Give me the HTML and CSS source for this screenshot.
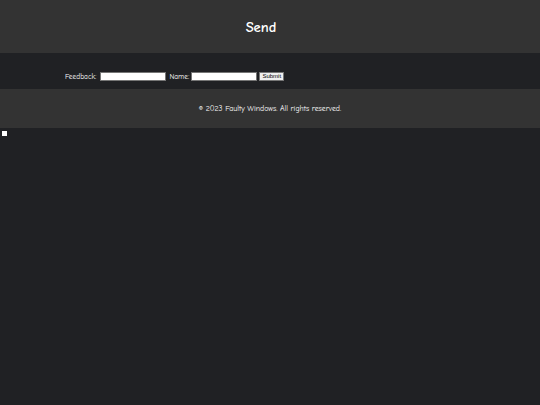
FILE: index.html
```html
<!DOCTYPE html>
<html>
<head>
<meta charset="utf-8">
<link rel="stylesheet" href="styles.css">
</head>
<body>
<header class="top">
  <h1 class="title">Send</h1>
</header>
<section class="feedback">
  <form class="form">
    <label class="lbl">Feedback:</label>
    <input class="field field-first" type="text">
    <label class="lbl lbl-name">Name:</label>
    <input class="field field-second" type="text">
    <button class="submit" type="button">Submit</button>
  </form>
</section>
<footer class="bottom">
  <p class="copy">© 2023 Faulty Windows. All rights reserved.</p>
</footer>
<div class="dot"></div>
</body>
</html>
```

FILE: styles.css
```css
html, body {
  margin: 0;
  padding: 0;
  background: #202124;
  color: #ffffff;
  font-family: "Comic Sans MS", "Comic Neue", cursive, sans-serif;
}
.top {
  background: #333333;
  height: 53px;
  display: flex;
  align-items: center;
  justify-content: center;
  padding-right: 18px;
}
.title {
  margin: 0 0 -1px 0;
  font-size: 14.6px;
  font-weight: bold;
}
.feedback {
  height: 36px;
  display: flex;
  align-items: flex-end;
  padding-left: 65px;
  box-sizing: border-box;
  padding-bottom: 8px;
}
.form {
  display: flex;
  align-items: center;
  font-size: 7.4px;
}
.lbl {
  color: #ffffff;
}
.field {
  width: 64px;
  height: 7px;
  padding: 0;
  border: 1px solid #767676;
  background: #ffffff;
  box-sizing: content-box;
  margin: 0;
}
.field-first {
  margin-left: 4px;
}
.lbl-name {
  margin-left: 3px;
}
.field-second {
  margin-left: 2px;
}
.submit {
  font-family: "Liberation Sans", Arial, sans-serif;
  font-size: 6px;
  height: 9px;
  width: 25px;
  padding: 0;
  line-height: 7px;
  margin-left: 2px;
  background: #efefef;
  border: 1px solid #767676;
  color: #000;
}
.bottom {
  background: #333333;
  height: 39px;
  display: flex;
  align-items: center;
  justify-content: center;
}
.copy {
  margin: 0 0 1px 0;
  font-size: 7.8px;
}
.dot {
  width: 5px;
  height: 5px;
  background: #ffffff;
  margin: 3px 0 0 2px;
}
```
